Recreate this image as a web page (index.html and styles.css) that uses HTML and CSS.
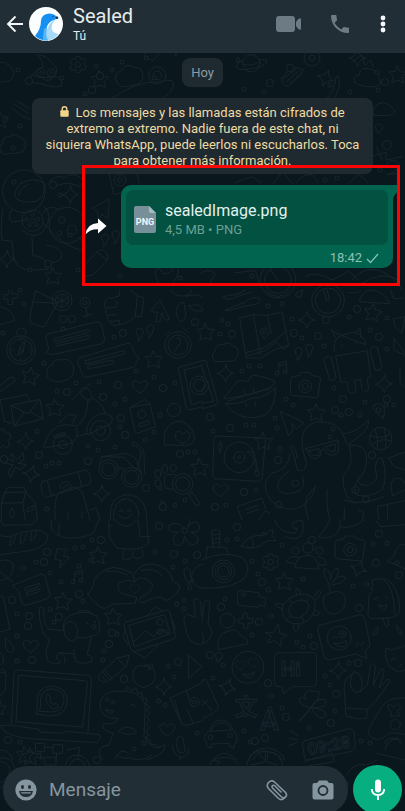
FILE: index.html
```html
<!DOCTYPE html>
<html lang="es">
<head>
<meta charset="utf-8">
<meta name="viewport" content="width=device-width, initial-scale=1">
<title>Sealed</title>
<link rel="stylesheet" href="styles.css">
</head>
<body>
<div class="app">
  <svg class="wallpaper" viewBox="0 0 405 811" preserveAspectRatio="xMidYMid slice" aria-hidden="true">
    <defs>
      <path id="star" d="M-3-26L6-9L26-7L12 7L17 25L0 17L-19 24L-14 5L-27-8L-9-10Z"/>
      <path id="spark" d="M2-26Q4-4 26 0Q5 3 1 26Q-3 4-26 1Q-4-3 2-26Z"/>
      <path id="heart" d="M0 20Q-30 2-21-13Q-11-25 0-9Q14-25 22-10Q25 4 0 20Z"/>
      <path id="cloud" d="M-30 24Q-46 6-28-8Q-26-30-4-26Q10-38 24-22Q44-18 40 4Q36 24 16 24Z"/>
      <g id="quotes"><path d="M-24 0a11 11 0 1 1 16 2q0 14-12 20q4-8 2-14q-5-2-6-8ZM8-10a11 11 0 1 1 16 2q0 14-12 20q4-8 2-14q-5-2-6-8Z"/></g>
      <g id="notes"><path d="M-10 14V-14L14-20V10M-10-6L14-12"/><circle cx="-15" cy="15" r="6"/><circle cx="9" cy="11" r="6"/></g>
      <g id="camera"><path d="M-40-25L-18-30L-14-38H14L18-30L40-26Q46-24 45-16L38 32Q36 38 30 37L-40 30Q-46 28-45 22L-44-18Q-44-24-40-25Z"/><circle r="19" cy="3"/><circle r="9" cy="3"/></g>
      <g id="gear"><path d="M-5-24H6L9-15L18-19L24-9L17-3L25 6L18 17L9 14L6 24H-6L-9 14L-19 18L-25 7L-17 1L-24-10L-17-19L-9-15Z"/><circle r="8"/></g>
      <g id="planet"><circle r="26"/><path d="M-25-8Q-52 2-44 14Q-30 24 10 14Q50 4 46-8Q42-14 24-10M-26 2Q0 12 27-6"/></g>
    </defs>

    <!-- top left -->
    <g transform="translate(0 50) scale(.3333)">
      <path d="M100 74Q112 54 130 50Q128 30 112 14Q144 18 156 40Q180 56 164 78Q190 86 184 108Q160 116 120 100Q84 100 84 88Q88 76 100 74ZM104 78Q130 88 164 78"/>
      <circle cx="122" cy="68" r="12"/><circle cx="154" cy="68" r="12"/><circle cx="122" cy="68" r="4"/><circle cx="154" cy="68" r="4"/>
      <path d="M128 84Q144 100 160 82Z"/>
      <use href="#gear" x="234" y="44"/><use href="#star" x="300" y="88"/>
      <path d="M0 38Q14 34 24 44Q44 56 40 76Q36 98 0 96"/>
      <path d="M38 160Q60 172 84 190M48 152Q70 166 90 178M36 172Q56 196 90 208M62 156L72 166"/>
      <use href="#star" x="0" y="208"/><use href="#cloud" x="36" y="286" transform="rotate(-6 36 286)"/>
      <circle cx="72" cy="424" r="64"/><path d="M62 400Q100 380 132 398Q138 440 110 454Q60 462 44 440Q46 414 62 400ZM56 436Q64 410 84 404"/>
      <path d="M8 478Q0 530 6 570L36 574L42 630Q60 664 100 660L144 658Q150 640 122 622L98 616L96 560M36 480Q20 500 36 516L74 510M132 470Q164 500 128 546Q100 570 66 540M140 586Q186 590 186 618Q180 640 144 640"/>
      <circle cx="98" cy="512" r="32"/><circle cx="98" cy="512" r="7"/><circle cx="98" cy="494" r="5"/><circle cx="115" cy="506" r="5"/><circle cx="110" cy="525" r="5"/><circle cx="88" cy="526" r="5"/><circle cx="80" cy="507" r="5"/>
      <circle cx="202" cy="526" r="54"/><path d="M128 490Q146 460 176 478M238 562Q262 590 242 600Q190 590 130 520"/><circle cx="186" cy="510" r="10"/><circle cx="216" cy="540" r="14"/><circle cx="178" cy="550" r="7"/>
      <use href="#spark" x="20" y="628"/><use href="#spark" x="210" y="434"/><use href="#star" x="160" y="678"/>
      <path d="M254 646L294 602Q310 594 320 608Q328 618 322 630L280 674L252 680ZM290 606Q304 616 320 630"/>
      <path d="M278 474L328 448L324 506L306 492L296 510L292 486Z"/>
      <path d="M150 392Q176 372 194 384Q214 364 240 382Q260 400 240 410Q200 392 174 406Z"/>
      <path d="M328 372L406 350L420 412L344 434Z"/><circle cx="360" cy="390" r="18"/><circle cx="360" cy="390" r="7"/>
      <use href="#quotes" x="330" y="570"/>
    </g>
    <!-- top centre and right -->
    <g transform="translate(202 50) scale(.3333)">
      <path d="M-256 96Q-268 70-242 62Q-230 36-204 52Q-172 50-178 90Q-190 108-230 110Q-250 112-256 96Z"/>
      <path d="M-280 152Q-200 92-132 96Q-78 80-86 110Q-100 150-180 170"/><circle cx="-134" cy="76" r="26"/><circle cx="-134" cy="76" r="13"/>
      <use href="#heart" x="-150" y="12"/><use href="#spark" x="-80" y="-8"/>
      <use href="#planet" x="148" y="40"/>
      <path d="M240 86Q246 68 278 52L304 58Q300 74 262 108Q238 112 240 86ZM252 96L292 62M262 100L298 70M246 84L282 58"/>
      <use href="#spark" x="370" y="84" transform="rotate(20 370 84)"/>
      <path d="M410 78Q420 112 392 152Q376 158 372 148Q400 120 402 82Z"/>
      <path d="M458 98Q452 78 472 74Q476 50 500 56Q532 60 532 88Q542 106 520 110Q480 112 458 98Z"/>
      <use href="#star" x="588" y="74"/><path d="M452 36L478 14L490 46L506 30L514 52"/>
      <use href="#spark" x="466" y="24"/>
      <path d="M514 188Q514 160 544 158Q572 166 580 188Q570 200 514 196Z"/>
      <path d="M520 230Q526 216 540 226Q546 240 528 248ZM544 276Q570 262 570 288L556 300L542 290ZM514 318L552 306V330L600 320M524 292L540 330"/>
      <path d="M552 346Q560 326 584 334Q600 350 574 366L556 374L588 370"/>
      <circle cx="330" cy="24" r="24"/><circle cx="330" cy="24" r="9"/>
      <path d="M284 398Q300 370 330 374L350 398M214 400L240 366L272 400M100 398L150 380L180 400M440 400L470 372L498 398"/>
      <circle cx="228" cy="690" r="54"/><circle cx="228" cy="690" r="40"/><path d="M228 690L206 660"/>
      <path d="M-130 700Q-150 660-130 654L-116 672Q-86 668-90 654L-70 650Q-70 690-100 708M-6 672Q20 650 40 672L24 700M100 668L160 662L172 700M310 680Q340 660 390 690L440 664L470 690M480 700Q540 660 590 690"/>
      <path d="M450 690Q480 650 530 660Q580 680 600 720"/>
    </g>
    <!-- middle left -->
    <g transform="translate(0 290) scale(.3333)">
      <path d="M36 0V12H54V24H38V44H24V28H12V14H26V0M0 50Q40 58 44 92L0 104M108 2L174 36L138 102Q130 116 118 108L90 98Q88 70 108 2ZM104 36L172 40"/>
      <circle cx="186" cy="32" r="30"/><circle cx="186" cy="32" r="20"/><path d="M186 12V52M168 22L204 42M168 42L204 22"/>
      <circle cx="255" cy="38" r="15"/><circle cx="255" cy="38" r="6"/><path d="M258 54L263 78M250 80L275 72"/>
      <path d="M316 34Q318 20 336 24L358 18V0M316 34Q308 46 318 54Q312 68 322 76Q318 92 332 94Q330 110 352 106Q362 104 358 92M318 54L346 52Q358 42 346 32M322 76L350 74M332 94L358 92M358 104Q390 100 406 78L424 80L432 24L412 18L392 0M406 78L412 18"/>
      <path d="M454 62L480 30L508 88Q498 94 492 84L486 68L480 94L468 96L472 66Q460 70 454 62ZM512 0Q524 20 552 18Q580 10 572 0M540 40Q520 60 534 86Q544 106 558 78L552 38ZM556 20Q584 8 608 22M566 48Q586 70 608 62Q608 36 566 48"/>
      <circle cx="63" cy="180" r="43"/><circle cx="63" cy="180" r="34"/><circle cx="64" cy="128" r="14"/><path d="M54 194L64 164L74 154L70 184ZM58 176L70 184M63 150V156M63 208V212M34 180H39M88 180H94"/>
      <path d="M144 132L288 96Q302 94 306 108L314 146Q314 158 302 162L156 194L136 188L146 178L138 144Q136 134 144 132ZM162 146L266 118Q274 122 266 128L164 154ZM168 160L266 136Q274 140 266 146L170 168Z"/>
      <path d="M238 204L382 160Q394 160 398 174L404 192L418 204L408 214Q412 226 400 232L260 262Q248 262 246 250L232 216Q232 206 238 204ZM256 212L372 182Q380 186 372 192L258 222ZM264 226L338 210Q346 216 338 222L266 236Z"/>
      <path d="M142 248Q138 228 158 226Q162 204 184 210Q212 202 220 230Q226 258 200 270Q160 284 142 262Q138 254 142 248Z"/>
      <use href="#star" x="462" y="208"/><use href="#star" x="92" y="258" transform="rotate(10 92 258)"/><use href="#star" x="166" y="353"/>
      <use href="#quotes" x="434" y="132"/><use href="#heart" x="420" y="290"/>
      <circle cx="534" cy="165" r="40"/><circle cx="534" cy="165" r="30"/><path d="M532 145Q546 140 540 160L524 184M496 136L508 126M552 116L564 128"/>
      <path d="M536 232L609 212M536 232Q534 240 538 250L558 350Q562 362 576 358L609 350M552 240L609 226M552 240L574 344L609 334"/>
      <circle cx="598" cy="286" r="28"/><circle cx="598" cy="286" r="18"/>
      <path d="M0 286L30 262Q48 258 44 274L0 306M0 330L80 314L90 334M0 330L14 394L36 400M34 346L120 328L130 386L44 408ZM34 346L84 372L120 328M44 408L72 366M130 386L90 366"/>
      <path d="M218 328L270 280M240 306Q242 288 264 296Q284 322 272 330Q250 332 240 306ZM264 330Q264 380 232 408L196 404Q150 406 132 466Q132 476 144 472L206 462Q240 450 230 412M276 320L310 352L314 370Q280 370 264 406Q256 426 264 434L334 400Q346 378 314 370M176 400L204 374L228 376L218 402M162 438L194 426Q202 432 192 438L166 444Z"/>
      <circle cx="188" cy="464" r="29"/><circle cx="188" cy="464" r="12"/><circle cx="302" cy="422" r="30"/><circle cx="302" cy="422" r="14"/><path d="M230 440L264 430"/>
      <path d="M390 352L434 328L450 342L466 410L412 430Q406 430 404 420ZM390 352L450 342M416 402L446 392Q452 400 444 404L420 410Z"/><circle cx="425" cy="373" r="12"/>
      <circle cx="522" cy="360" r="20"/><path d="M494 464Q484 410 528 394Q570 390 584 440Q584 466 556 466Z"/><use href="#heart" x="548" y="442"/>
      <path d="M0 420L10 416L16 430L30 430L34 444L24 452L30 466L18 474L8 466L0 474"/><use href="#spark" x="76" y="454"/><use href="#spark" x="94" y="552" transform="rotate(10 94 552)"/><use href="#spark" x="305" y="611"/>
      <path d="M34 490L52 510L70 488L72 508L54 520L80 524L60 540L46 530L32 562L24 548L40 524L14 520L20 504L40 514Z"/>
      <circle cx="326" cy="538" r="29"/><circle cx="326" cy="538" r="20"/><circle cx="395" cy="562" r="30"/><circle cx="395" cy="562" r="21"/><path d="M300 520L306 500L378 490Q410 500 412 520L426 550M306 500L372 502L408 540M412 540L424 490Q418 470 396 464Q394 454 406 458Q436 474 432 500L434 550M354 536Q366 528 374 544"/>
      <path d="M128 574L254 540Q266 540 272 562Q274 580 264 584L140 622Q128 622 124 596Q122 580 128 574ZM142 572L154 618M234 546L246 590M166 690Q160 620 180 606L226 590L246 604L270 690M180 596Q180 576 200 574Q216 580 212 594M190 596Q192 584 204 586M204 668V690M246 664V686M270 660L288 654L300 690"/>
      <path d="M14 608L24 592H72L78 606M14 608L78 606L106 640L112 690M14 608L4 640V690M14 608L4 640L68 638L78 606M68 638L76 690M82 656L102 646V656L84 666ZM36 654Q52 676 36 684Q22 676 36 654Z"/>
      <path d="M332 690Q324 620 382 614Q440 616 440 690M340 690Q340 630 378 626Q418 634 416 680M358 664Q364 656 370 664M382 664Q388 656 394 664M356 674Q376 700 396 672"/>
      <circle cx="548" cy="582" r="31"/><circle cx="548" cy="582" r="21"/><path d="M566 612L576 606L600 640Q596 650 586 644ZM528 554H500Q490 560 494 580Q490 600 520 598"/><ellipse cx="474" cy="552" rx="9" ry="12"/><ellipse cx="494" cy="536" rx="9" ry="12"/><ellipse cx="520" cy="534" rx="9" ry="12"/><ellipse cx="474" cy="580" rx="9" ry="11"/>
      <use href="#star" x="600" y="532"/>
    </g>
    <!-- middle right -->
    <g transform="translate(202 290) scale(.3333)">
      <path d="M62 22L80 16Q100 18 130 0M62 22Q80 34 104 20L150 6M70 60L130 36Q150 16 174 26Q176 44 150 44L76 62ZM188 0Q230 40 264 0M284 8L302 0L296 24L282 18ZM472 34Q480 0 510 0Q550 6 562 40ZM440 8H468L476 0M566 0L574 26L606 24"/>
      <circle cx="378" cy="32" r="49"/><circle cx="378" cy="32" r="38"/><path d="M364 0L374 32L382 28L376 0"/>
      <path d="M114 84L154 74L196 76L240 66L260 166L216 180L178 204L134 204ZM132 188L184 174L220 150L248 128M134 198L190 182L222 156M154 74L176 196M196 76L208 130M216 148L244 178L256 170"/>
      <path d="M188 146Q170 124 178 118Q190 108 200 120Q206 130 188 146Z"/><circle cx="188" cy="127" r="5"/>
      <use href="#star" x="12" y="126"/><use href="#star" x="514" y="68" transform="rotate(8 514 68)"/><use href="#spark" x="314" y="90"/><use href="#cloud" x="68" y="190"/><use href="#quotes" x="305" y="190"/><use href="#notes" x="240" y="234"/><use href="#camera" x="310" y="286"/>
      <use href="#spark" x="70" y="250"/><use href="#spark" x="546" y="282"/><use href="#star" x="344" y="368"/><use href="#star" x="186" y="454"/><use href="#heart" x="56" y="600"/>
      <path d="M398 182Q390 146 420 136L390 124M400 142L388 118M460 128L474 114L476 142M420 136Q440 126 460 128Q486 136 492 164ZM402 198L496 182L506 260L496 266L500 298Q490 310 480 296L476 268L458 272L462 304Q450 316 440 304L436 276L418 276ZM366 210Q370 196 388 202L402 262Q400 274 384 270ZM504 180Q506 168 526 172L540 230Q536 244 520 240Z"/><circle cx="420" cy="166" r="2"/><circle cx="462" cy="158" r="2"/>
      <path d="M64 326L104 276Q124 268 136 276L150 256Q190 258 218 274Q220 290 180 302Q130 320 64 326ZM70 340Q110 346 150 324Q190 326 220 292Q222 350 190 376Q110 400 70 340ZM78 334Q120 316 204 296M124 298L130 310M154 296L156 308M130 340L134 350M160 336L158 350"/>
      <path d="M0 212L12 212L48 338Q46 346 0 356M0 232L36 334L0 340M0 262Q18 280 0 304"/>
      <path d="M236 364L306 398L284 418L270 400L272 422L260 436Z"/>
      <path d="M42 438L184 444Q192 446 190 456L180 566Q176 574 168 574L38 566Q30 562 32 552L36 446Q36 440 42 438Z"/><circle cx="112" cy="502" r="46"/><circle cx="112" cy="502" r="17"/><circle cx="112" cy="502" r="4"/><path d="M136 486Q150 480 156 494L168 540M136 486L162 510V544M56 454L60 470L54 488L50 470Z"/><circle cx="165" cy="550" r="8"/>
      <path d="M304 486Q286 410 344 396Q410 392 424 436Q432 460 442 466L448 512Q440 540 424 560Q420 620 460 640M304 486L314 520Q310 550 286 540Q280 500 264 468Q280 462 286 506M264 492Q260 540 210 550Q180 570 194 610Q214 660 280 658Q330 640 340 590Q304 620 312 660L320 690M260 544Q220 570 228 600Q250 620 290 604Q310 596 302 560M422 432Q460 430 500 390Q500 420 470 440L440 464M442 466Q490 460 494 500Q494 550 466 572Q450 600 466 616Q500 624 540 600Q560 560 540 504Q520 500 520 540Q536 570 500 586Q460 590 470 560M376 600Q370 640 384 690M426 630Q470 650 546 620M426 660Q430 640 426 690M480 690Q494 660 470 660"/>
      <path d="M310 476L408 450L410 484Q396 502 376 492L366 476L356 482Q360 504 338 506Q320 502 318 484ZM322 482L352 476L350 496Q332 502 322 482ZM370 470L400 462L400 482Q384 492 370 470Z"/>
      <circle cx="280" cy="580" r="10"/><circle cx="460" cy="600" r="11"/><circle cx="230" cy="644" r="10"/><circle cx="492" cy="628" r="10"/>
      <circle cx="536" cy="446" r="34"/><path d="M504 436Q540 452 566 430M520 418Q530 450 526 478M546 414Q556 450 550 476M508 464Q540 440 568 454"/>
      <path d="M544 386Q506 358 516 346Q530 334 546 350Q550 366 544 386Z"/><circle cx="530" cy="360" r="7"/>
      <path d="M572 616Q560 580 576 566Q600 560 609 580M609 600L572 616M560 504L609 486M560 504L576 530L609 540M576 86L609 80L600 130L580 110ZM576 144L609 190M576 144V180L609 196M594 236V280L609 292"/>
      <path d="M106 650L180 624L190 656M106 650L120 690M130 658L168 646M134 670L170 658M170 690L190 662L204 670M530 690L526 650L609 632M556 640V690"/>
    </g>
    <!-- lower left -->
    <g transform="translate(0 520) scale(.3333)">
      <path d="M0 44Q20 60 60 38L110 30Q150 36 142 60Q130 90 60 96L0 104M28 76L34 52M28 76Q40 80 46 48M60 70L64 44M60 70Q72 74 80 40M92 62L94 36M92 62Q104 64 110 32M0 0L10 16L96 14L108 0"/>
      <path d="M154 0Q150 40 176 46L188 52Q240 60 280 40L296 0M176 46L178 10M326 0L328 50L350 84Q420 96 446 70L440 0M326 20L336 14M414 0L420 50L452 50M346 0Q380 40 410 0M370 90L368 116Q390 122 396 110L400 92M400 112Q420 120 430 108L426 86"/>
      <path d="M552 24Q530 0 508 16Q500 40 536 36Q510 50 526 74Q550 86 554 48Q566 84 590 70Q604 50 572 36Q604 40 598 16Q586-6 562 22Q576 0 566-6"/><circle cx="554" cy="32" r="8"/>
      <path d="M172 86L200 90L190 108L208 112L178 146L184 122L166 118Z"/><use href="#star" x="296" y="106"/><use href="#star" x="190" y="243" transform="rotate(5 190 243)"/><use href="#star" x="341" y="290"/><use href="#notes" x="234" y="170"/>
      <path d="M0 122Q36 112 40 140Q40 176 0 182M0 156L38 186M38 196L124 162Q134 162 136 172L150 224Q150 232 142 236L78 256Q68 256 64 244L58 216ZM74 204L118 190Q124 196 116 200L78 212ZM80 218L118 206Q122 212 114 216L82 226Z"/>
      <path d="M264 222Q284 200 282 180Q300 150 340 142Q370 144 398 160L404 186Q384 176 358 188Q346 210 370 222L410 232L406 250Q380 252 340 252L312 266Q280 250 264 222ZM404 160Q420 130 460 132Q510 140 520 186L540 196Q540 220 500 242L484 232Q460 230 430 248Q410 250 422 232Q456 220 458 196Q450 174 416 174L404 186M320 154Q360 150 382 166M424 152Q460 140 486 166"/><use href="#heart" x="405" y="206" transform="translate(405 206) scale(.7) translate(-405 -206)"/>
      <path d="M552 150Q562 134 570 152L574 172L582 182L568 184L576 206Q568 216 564 204L564 184L556 176ZM609 132Q576 140 574 176Q580 200 609 206M582 240Q594 230 602 246L604 286M582 240L586 292L560 282Q546 290 556 320Q560 370 600 374"/>
      <path d="M118 264Q124 254 132 268Q128 310 146 328L192 332M118 264Q116 320 138 350L148 358L138 396L144 424Q160 436 178 430Q184 420 168 414L176 398L222 402L228 424Q250 436 276 424Q280 408 262 404L274 348M192 332Q184 300 210 286Q260 266 290 288Q304 310 296 340Q270 356 232 354M192 332Q186 310 210 304Q230 306 232 330Q236 360 214 362Q192 356 192 332ZM180 398Q200 410 194 428M236 274Q260 264 280 286M222 390V404"/><circle cx="282" cy="320" r="6"/><circle cx="262" cy="310" r="2"/><circle cx="284" cy="306" r="2"/>
      <use href="#heart" x="92" y="378"/><path d="M16 354Q50 380 38 396Q22 400 18 384ZM0 228L10 230L30 328L0 336M0 396Q16 410 8 430L0 434"/>
      <path d="M378 306L500 270Q508 270 510 278L526 346Q526 354 518 358L406 394Q396 396 392 386L372 318Q372 308 378 306ZM388 316L494 284L510 340L404 380ZM400 366L436 332L460 350L482 330L508 342M440 290L464 260L484 270M518 300L526 326L520 340M404 396L434 414L476 374M376 330L368 350L384 374"/><circle cx="480" cy="306" r="10"/><path d="M470 340Q470 328 484 328Q500 328 506 340"/>
      <path d="M296 466L352 414L388 406L378 440L322 486Q306 490 296 478ZM308 456L328 480M314 450L336 474M352 414L374 440M306 470L316 482"/>
      <path d="M434 438Q400 430 398 466Q404 500 432 502Q468 494 466 460Q460 434 434 438ZM434 438L440 434Q448 430 446 450Q460 448 458 430Q446 434 446 450M566 406L606 440L566 474Z"/><use href="#spark" x="491" y="500"/>
      <path d="M34 612L42 464Q44 448 58 450L262 466Q276 468 274 482L264 638M48 604L56 466L254 482Q264 484 262 494L248 620ZM0 616H34L118 628L120 636L188 640L196 634L300 644Q304 656 292 668L92 656Q10 650 0 616Z"/>
      <path d="M112 566Q104 500 154 498Q202 502 202 544Q198 586 154 588L110 582ZM122 560Q114 510 156 506Q194 512 192 544Q186 576 154 576L118 574ZM140 524Q150 520 152 536L150 544Q160 558 168 550Q180 556 174 562Q160 572 146 556Q132 540 140 524Z"/>
      <path d="M0 460Q14 450 18 466L16 510L0 528M2 452A8 8 0 0 1 16 460M0 540L4 556L18 560L8 572L10 584L0 580"/>
      <path d="M354 596Q300 598 300 552Q304 514 350 514Q420 506 436 556L432 650Q460 700 494 674Q500 690 470 708L440 720M354 596Q350 614 310 612Q300 630 340 640L326 676Q300 676 298 700L310 720M356 634Q370 614 400 626L410 638Q380 650 356 634ZM346 716Q360 680 386 700M378 510L382 500L396 512L408 504L414 520L426 518L428 534L440 536L438 552L450 560L440 570L450 582L440 590L450 602L440 612L448 624L438 632L446 646L436 652L450 662L454 676L468 672L478 684M316 568Q330 576 342 570Q338 584 326 580ZM390 556Q400 548 406 560"/><circle cx="322" cy="540" r="5"/><circle cx="340" cy="546" r="5"/>
      <path d="M510 534Q560 514 609 486M510 534L546 612L560 616L609 602M524 540L540 600M560 510L568 540M562 570L580 610"/><circle cx="584" cy="546" r="14"/><circle cx="584" cy="546" r="6"/>
      <use href="#heart" x="502" y="628"/><path d="M532 656Q534 644 548 652L556 690Q552 702 538 698L530 680ZM518 676Q518 706 544 712Q566 710 568 684M540 712V720"/>
      <path d="M108 670H134V694H108ZM160 674H188V700H160ZM134 682H160M120 694L124 720M170 700L168 720M122 712H168M202 690L240 682L232 720M0 690Q30 690 38 720"/><use href="#star" x="76" y="704"/>
    </g>
    <!-- lower right -->
    <g transform="translate(202 520) scale(.3333)">
      <path d="M16 80L74 84L78 104M16 80L12 114M28 34Q40 24 54 34L52 82M28 34L34 80M30 46L54 42M32 58L54 54M32 70L54 66M0 120Q60 90 120 112Q150 140 130 172Q90 210 0 204"/><circle cx="64" cy="154" r="34"/><circle cx="64" cy="154" r="17"/><circle cx="64" cy="154" r="25"/>
      <path d="M118 78Q140 40 188 46L202 32L214 30L210 46L222 62L196 62Q160 96 118 78ZM150 54Q160 70 148 86M178 48L184 36L196 44M218 0Q230 40 280 40L286 26Q260 24 276 6L300 0Q310 30 294 50Q280 62 250 50M350 50Q370 30 384 0M350 50Q380 62 404 40Q420 20 412 0M412 20Q450 30 486 0M520 0L536 20L609 14"/>
      <use href="#gear" x="206" y="126"/><use href="#star" x="248" y="184"/><use href="#spark" x="470" y="146" transform="rotate(20 470 146)"/><use href="#camera" x="444" y="86"/>
      <circle cx="318" cy="84" r="16"/><circle cx="280" cy="92" r="11"/><circle cx="352" cy="92" r="11"/><path d="M280 142Q280 108 318 106Q348 108 350 146ZM254 126Q258 108 276 110L290 112M346 110Q372 110 372 136L352 134M254 126L278 130"/>
      <path d="M556 124Q580 110 584 86Q596 70 609 74M556 124L609 146M112 212L170 218L172 230L192 234L188 260L174 254L170 262L110 256Q104 250 108 216Z"/><circle cx="124" cy="224" r="5"/>
      <path d="M240 264Q250 230 300 222Q340 224 340 256Q336 300 296 312Q240 316 240 264ZM260 270Q262 244 300 240Q322 242 320 262Q312 292 284 294Q262 294 260 270ZM284 224Q276 206 290 206L296 222M334 232Q350 206 356 214Q358 226 340 240M340 272Q360 276 348 288L332 284M276 314Q272 334 284 334Q292 330 290 314M240 266Q216 260 220 252Q230 248 242 254M262 238L270 250M320 236L312 248M252 300L266 286M306 306L298 292"/>
      <path d="M384 220Q360 220 364 250Q370 284 400 282Q434 270 430 236Q424 206 386 218L380 190M380 190Q360 160 368 146Q384 148 386 180Q390 146 408 144Q414 160 390 190Q410 160 430 172Q430 190 390 194"/>
      <path d="M514 196Q504 180 516 178L548 176Q590 190 594 270Q590 290 560 294L510 296Q496 294 498 280L502 222L514 210L506 206ZM546 180Q576 200 578 280M542 294L550 318Q560 324 560 312L558 294M516 238L528 232M550 226L560 236M530 254Q544 264 554 252Q556 270 542 270Q534 266 530 254Z"/>
      <circle cx="76" cy="302" r="22"/><path d="M48 388Q44 350 66 338L88 330Q110 330 112 344Q136 352 138 370ZM0 340Q10 370 0 372M0 306L6 250Q12 236 24 246L18 310Q34 330 26 350Q16 370 0 370"/>
      <path d="M124 282L134 278L136 294L154 296L152 308L138 310V324H126L124 310L108 308L110 296L122 296Z"/><path d="M228 314L234 340L256 346L238 356L236 380L218 362L196 370L208 348L190 338L214 338Z"/>
      <path d="M352 316L474 284Q486 284 488 296L504 372Q502 386 490 392L494 416L462 402L382 420Q370 420 366 408L348 332Q346 320 352 316Z"/><circle cx="412" cy="354" r="36"/><circle cx="422" cy="342" r="10"/><circle cx="422" cy="342" r="3"/><path d="M388 356Q396 346 406 352M396 370Q416 374 434 362Q436 380 422 380Q402 380 396 370ZM464 380L470 366M476 378L484 366M514 340Q518 322 526 322Q532 338 514 346ZM584 318Q600 328 600 344Q586 340 584 318Z"/>
      <circle cx="138" cy="442" r="48"/><use href="#heart" x="116" y="436" transform="translate(116 436) scale(.7) translate(-116 -436)"/><use href="#heart" x="154" y="428" transform="translate(154 428) scale(.7) translate(-154 -428)"/><path d="M124 462Q144 468 158 454Q154 474 140 474Z"/>
      <path d="M228 398H334Q344 400 344 410V488Q342 498 334 500H272L244 522L240 500H228Q218 498 218 488V410Q218 400 228 398Z"/>
      <text class="doodle-text" x="236" y="468" font-size="62">Hi</text>
      <path d="M552 384L568 390Q584 382 596 384L609 376M552 384Q546 410 562 440L590 456L609 450M566 420Q574 412 582 418M590 440L600 432"/>
      <use href="#spark" x="408" y="452"/><use href="#spark" x="76" y="502" transform="rotate(15 76 502)"/>
      <path d="M430 564L426 500Q430 470 450 464Q450 450 470 460Q490 490 474 516M450 464Q436 500 460 518L478 512L496 494L506 436Q516 424 520 440L514 496L534 452Q546 442 546 456L532 504L556 478Q568 476 562 488L520 544L496 568L494 596Q460 600 432 588L430 564L496 568"/>
      <path d="M328 562Q290 560 292 536Q304 528 314 540Q298 516 322 512Q340 516 350 514Q358 530 328 562Q340 536 366 538Q384 556 350 564L328 562Q380 570 370 590Q350 608 328 562Q300 600 290 604L328 562"/>
      <path d="M0 482L12 478L50 562Q44 580 0 596M0 540L30 570M0 556L18 540M498 640Q500 620 540 560Q560 530 609 534M498 640Q510 664 540 656L560 640Q580 636 609 644M562 552L576 562L586 550L596 562L586 574L594 588L578 588L566 590L568 576L558 566ZM550 670Q550 650 580 656Q600 660 594 676"/><circle cx="580" cy="614" r="15"/><path d="M524 700L609 720M550 690Q550 660 590 654"/>
      <text class="doodle-text" x="98" y="586" font-size="68">文</text><text class="doodle-text" x="174" y="630" font-size="84">A</text>
      <path d="M8 658Q6 640 22 634Q30 600 58 600Q90 604 92 630Q108 640 104 668L96 672V684L84 680L82 670L30 672L28 684L16 680L14 670ZM26 634L88 630Q80 608 56 608Q34 612 26 634Z"/><circle cx="26" cy="652" r="7"/><circle cx="84" cy="646" r="7"/>
      <path d="M308 662L442 626Q452 626 456 636L460 676Q458 690 448 694L322 720L308 716L302 674Q302 664 308 662ZM264 632L288 646M262 656L286 658M262 676L286 668"/>
      <text class="doodle-text" transform="rotate(-11 320 706)" x="320" y="706" font-size="50">09:28</text>
      <path d="M140 720Q150 684 196 684Q240 690 248 720M152 720Q160 694 196 694Q230 700 236 720M34 720Q60 680 106 720M196 694V720M168 700L190 720"/>
    </g>
    <!-- bottom edge -->
    <g transform="translate(0 755) scale(.3333)">
      <path d="M0 10Q34 0 44 40Q40 90 0 100M0 20Q28 20 30 46Q24 76 0 84M110 8H134V30H168V10M196 34Q200 0 232 0Q264 6 270 34M208 34Q214 12 232 12Q250 14 256 34M350 0Q370 14 390 8Q420 24 456 0"/><use href="#star" x="92" y="4"/>
      <path d="M630 30Q630 10 666 8Q700 4 714 26M640 16L660 20L650 30M740 30Q750-20 796-12Q850-6 848 30M754 30L796 20L834 30M796-10V20M910 20L996-6L1004 20L920 34M1040 60Q1060 20 1100 30L1130 16M1020 150Q1050 100 1044 80"/>
    </g>

    <!-- scattered bubbles: wide stroke first, then the background colour inside it -->
    <defs>
      <path id="dots-s" d="M18 70h0M62 78h0M60 105h0M85 94h0M45 142h0M13 148h0M20 126h0M5 120h0M96 66h0M112 70h0M122 62h0M154 78h0M146 58h0M238 60h0M244 89h0M264 92h0M330 85h0M350 92h0M377 72h0M380 170h0M378 90h0M14 182h0M60 195h0M70 235h0M30 270h0M20 290h0M78 270h0M120 276h0M180 278h0M252 276h0M325 180h0M337 178h0M24 304h0M63 329h0M114 337h0M3 333h0M44 363h0M76 383h0M57 391h0M99 382h0M115 404h0M125 399h0M37 431h0M88 446h0M98 450h0M115 447h0M52 463h0M46 466h0M59 463h0M136 371h0M154 377h0M145 440h0M175 383h0M160 415h0M188 452h0M154 432h0M162 503h0M175 505h0M185 500h0M47 509h0M120 427h0M160 488h0M195 452h0M222 320h0M228 324h0M220 334h0M242 371h0M260 366h0M268 306h0M282 304h0M249 366h0M292 319h0M302 338h0M324 346h0M334 388h0M286 399h0M275 418h0M277 428h0M246 425h0M254 425h0M293 405h0M387 318h0M370 330h0M387 349h0M365 402h0M349 317h0M280 449h0M213 431h0M226 505h0M256 490h0M386 405h0M394 405h0M330 437h0M341 415h0M360 415h0M333 429h0M23 568h0M36 562h0M75 548h0M83 547h0M92 540h0M91 560h0M50 573h0M61 582h0M79 566h0M83 601h0M17 614h0M50 609h0M17 636h0M17 661h0M54 622h0M117 634h0M104 651h0M103 660h0M160 632h0M168 666h0M155 552h0M173 567h0M185 561h0M177 604h0M184 600h0M184 609h0M159 701h0M165 705h0M134 749h0M144 743h0M20 742h0M197 733h0M174 677h0M252 561h0M258 574h0M227 540h0M237 539h0M282 545h0M303 579h0M269 590h0M268 589h0M225 599h0M271 616h0M252 635h0M310 636h0M303 647h0M297 642h0M245 715h0M270 709h0M282 708h0M271 696h0M335 711h0M353 586h0M367 584h0M373 544h0M374 563h0M387 543h0M397 563h0M218 660h0M223 665h0M213 678h0M325 676h0M330 685h0M349 663h0M244 731h0M250 742h0M361 741h0M370 743h0M309 728h0"/>
      <path id="dots-l" d="M29 81h0M100 76h0M92 90h0M270 83h0M290 68h0M271 166h0M385 82h0M53 185h0M48 264h0M63 319h0M72 319h0M123 333h0M118 385h0M67 392h0M103 397h0M39 455h0M125 435h0M121 418h0M88 461h0M4 459h0M163 388h0M195 322h0M180 454h0M146 488h0M163 507h0M232 334h0M318 336h0M294 333h0M326 320h0M357 309h0M379 337h0M387 399h0M343 399h0M349 412h0M335 410h0M230 428h0M210 417h0M244 492h0M215 507h0M372 455h0M278 460h0M47 552h0M44 562h0M101 540h0M79 594h0M29 616h0M28 626h0M59 617h0M32 660h0M12 600h0M109 644h0M112 633h0M159 526h0M174 554h0M197 555h0M178 662h0M124 679h0M8 740h0M237 527h0M262 582h0M259 622h0M221 607h0M312 540h0M379 534h0M376 563h0M359 608h0M314 646h0M268 683h0M219 656h0M336 694h0M286 717h0M265 738h0M331 723h0M358 663h0M399 575h0M255 741h0M210 655h0M97 760h0"/>
    </defs>
    <use href="#dots-s" class="ring-s"/><use href="#dots-s" class="hole-s"/>
    <use href="#dots-l" class="ring-l"/><use href="#dots-l" class="hole-l"/>
  </svg>

  <header class="topbar">
    <button class="icon-btn back" type="button" aria-label="Atrás">
      <svg width="18" height="18" viewBox="0 0 18 18"><path d="M17 9H2M9.500 1.500L2 9L9.500 16.500" fill="none" stroke="#f2f6f8" stroke-width="1.900"/></svg>
    </button>
    <svg class="avatar" viewBox="0 0 34 34" aria-hidden="true">
      <circle cx="17" cy="17" r="17" fill="#fbfefe"/>
      <path d="M6 29Q12 22 12 13.500Q13 7 20 6.500Q25 6.500 27.500 9.500L29 10.500Q29 12 26 12.500Q18 15 17.500 22Q17 29 19 33.500Q11 33.500 6 29Z" fill="#1590f2"/>
      <path d="M25 13Q16 19 17 33.500Q25 33.500 29.500 27Q23 26 22.500 21Q22.500 17 26 13Z" fill="#a7d9f6"/>
      <path d="M15 22Q14 27 14 33.300H19Q16 28 18 20Z" fill="#55b5f7"/>
      <circle cx="28" cy="10.800" r="1.300" fill="#17354a"/><circle cx="24" cy="9.500" r=".6" fill="#17354a"/>
    </svg>
    <div class="contact">
      <h1>Sealed</h1>
      <p>Tú</p>
    </div>
    <nav class="actions">
      <button class="icon-btn" type="button" aria-label="Videollamada">
        <svg width="26" height="18" viewBox="0 0 26 18" fill="#6d7b84"><rect x="0" y="1" width="19" height="16" rx="3"/><path d="M20 7Q22 3.500 24 3.200Q25 3.200 25 4V14Q25 15 24 14.800Q22 14.500 20 11Z"/></svg>
      </button>
      <button class="icon-btn" type="button" aria-label="Llamada">
        <svg width="18" height="18" viewBox="3 3 18 18" fill="#6d7b84"><path d="M6.620 10.790c1.440 2.830 3.760 5.140 6.590 6.590l2.200-2.200c.27-.27.67-.36 1.020-.24 1.120.37 2.330.57 3.570.57.55 0 1 .45 1 1V20c0 .55-.45 1-1 1C10.610 21 3 13.390 3 4c0-.55.45-1 1-1h3.500c.55 0 1 .45 1 1 0 1.250.2 2.450.57 3.570.11.35.03.74-.25 1.020l-2.200 2.200z"/></svg>
      </button>
      <button class="icon-btn" type="button" aria-label="Más opciones">
        <svg width="10" height="20" viewBox="0 0 10 20" fill="#f4f8fa"><circle cx="5" cy="4" r="2.400"/><circle cx="5" cy="10" r="2.400"/><circle cx="5" cy="16" r="2.400"/></svg>
      </button>
    </nav>
  </header>

  <main class="chat">
    <p class="day">Hoy</p>
    <p class="notice"><svg class="lock" width="9" height="11" viewBox="0 0 9 11"><path d="M2.200 5V3a2.300 2.300 0 0 1 4.600 0V5" fill="none" stroke="#f3d58a" stroke-width="1.400"/><rect x=".3" y="4.300" width="8.400" height="6.500" rx="1" fill="#f3d58a"/></svg>Los mensajes y las llamadas están cifrados de extremo a extremo. Nadie fuera de este chat, ni siquiera WhatsApp, puede leerlos ni escucharlos. Toca para obtener más información.</p>

    <div class="message-row">
      <button class="icon-btn forward" type="button" aria-label="Reenviar">
        <svg width="22" height="17" viewBox="0 0 22 17"><path d="M.5 16.500Q2 5.500 13 5V.5L21.500 8L13 15.500V11.300Q5 11 .5 16.500Z" fill="#fff"/></svg>
      </button>
      <article class="bubble">
        <svg class="tail" width="7" height="14" viewBox="0 0 7 14" aria-hidden="true"><path d="M-1 0H7V5Q1 9 0 14H-1Z" fill="#00644e"/></svg>
        <a class="file" href="#">
          <svg width="22" height="27" viewBox="0 0 22 27" aria-hidden="true"><path d="M2 0H15L22 7V25Q22 27 20 27H2Q0 27 0 25V2Q0 0 2 0Z" fill="#768f98"/><path d="M15 0L22 7H17Q15 7 15 5Z" fill="#a2bcc1"/><text x="11" y="19" text-anchor="middle" class="file-type">PNG</text></svg>
          <span class="file-info">
            <span class="file-name">sealedImage.png</span>
            <span class="file-meta">4,5 MB • PNG</span>
          </span>
        </a>
        <p class="stamp"><time>18:42</time><svg width="13" height="11" viewBox="0 0 13 11"><path d="M1 6L4.500 9.500L12 1" fill="none" stroke="#7fc4b3" stroke-width="1.300"/></svg></p>
      </article>
    </div>
  </main>

  <footer class="composer">
    <div class="field">
      <button class="icon-btn" type="button" aria-label="Emojis">
        <svg width="22" height="22" viewBox="0 0 22 22"><circle cx="11" cy="11" r="10.600" fill="#8696a0"/><ellipse cx="7.500" cy="8" rx="1.500" ry="1.900" fill="#222e35"/><ellipse cx="14.500" cy="8" rx="1.500" ry="1.900" fill="#222e35"/><path d="M4 12H18Q17 18 11 18Q5 18 4 12Z" fill="#222e35"/><path d="M6 13.200H16L15.500 14.600H6.500Z" fill="#8696a0"/></svg>
      </button>
      <input type="text" placeholder="Mensaje" aria-label="Mensaje">
      <button class="icon-btn" type="button" aria-label="Adjuntar">
        <svg width="22" height="22" viewBox="0 0 22 22" fill="none" stroke="#8696a0" stroke-width="1.600" stroke-linecap="round"><path d="M17 20Q14.500 21.500 12 19L2.500 9.500Q0 6.500 2.500 3.500Q5.500 .5 8.500 3L19.500 13.500Q21.500 16 19.600 17.800Q17.500 19.800 15 17.500L6.500 9Q5.500 7.500 6.500 6.600Q7.700 5.700 9 7L15 13M17 20Q19 19.200 19.600 17.800"/></svg>
      </button>
      <button class="icon-btn" type="button" aria-label="Cámara">
        <svg width="22" height="20" viewBox="0 0 22 20"><path d="M7 .5H15L17 3H19.500Q21.500 3 21.500 5V17.500Q21.500 19.500 19.500 19.500H2.500Q.5 19.500 .5 17.500V5Q.5 3 2.500 3H5Z" fill="#8696a0"/><circle cx="11" cy="10.500" r="4.500" fill="none" stroke="#222e35" stroke-width="1.800"/></svg>
      </button>
    </div>
    <button class="mic" type="button" aria-label="Grabar audio">
      <svg width="16" height="22" viewBox="0 0 16 22"><rect x="5" y=".5" width="6" height="13" rx="3" fill="#fff"/><path d="M1.800 10Q2 16 8 16Q14 16 14.200 10M8 16V21" fill="none" stroke="#fff" stroke-width="1.900"/></svg>
    </button>
  </footer>
</div>
</body>
</html>
```
FILE: styles.css
```css
* {
  box-sizing: border-box;
}

body,
h1,
p {
  margin: 0;
}

body {
  font-family: Roboto, "Noto Sans", sans-serif;
  background: #0a171d;
  color: #e6ecef;
}

.app {
  position: relative;
  display: flex;
  flex-direction: column;
  height: 100vh;
  overflow: hidden;
  isolation: isolate;
}

.wallpaper {
  position: absolute;
  inset: 0;
  z-index: -1;
  width: 100%;
  height: 100%;
  fill: none;
  stroke: #19252c;
  stroke-width: 3;
  stroke-linejoin: round;
  stroke-linecap: round;
}

.doodle-text {
  font-family: Roboto, "Noto Sans CJK SC", sans-serif;
  font-weight: 700;
}

.ring-s {
  stroke-width: 5;
}

.hole-s {
  stroke: #0a171d;
  stroke-width: 3;
}

.ring-l {
  stroke-width: 8;
}

.hole-l {
  stroke: #0a171d;
  stroke-width: 6;
}

.icon-btn {
  display: flex;
  padding: 0;
  border: 0;
  background: none;
  cursor: pointer;
}

.topbar {
  display: flex;
  align-items: center;
  height: 53px;
  padding: 0 17px 5px 6px;
  background: #222e35;
}

.avatar {
  width: 34px;
  height: 34px;
  margin-left: 5px;
}

.contact {
  flex: 1;
  margin-left: 10px;
  padding-top: 2px;
}

.contact h1 {
  font-size: 20px;
  font-weight: 400;
  line-height: 22px;
}

.contact p {
  font-size: 12px;
  line-height: 18px;
}

.actions {
  display: flex;
  align-items: center;
  gap: 29px;
}

.chat {
  flex: 1;
  display: flex;
  flex-direction: column;
  align-items: center;
  padding-top: 5px;
}

.day {
  padding: 0 9px;
  border-radius: 8px;
  background: #1e2a30;
  color: #8d9ba4;
  font-size: 13px;
  line-height: 29px;
}

.notice {
  width: calc(100% - 64px);
  margin-top: 11px;
  padding: 7px 11px 5px;
  border-radius: 8px;
  background: #1e2a30;
  color: #f0dba4;
  font-size: 13px;
  line-height: 16px;
  text-align: center;
}

.lock {
  margin-right: 6px;
}

.message-row {
  position: relative;
  display: flex;
  align-items: center;
  align-self: stretch;
  gap: 14px;
  margin-top: 11px;
  padding: 0 12px 0 85px;
}

.message-row::after {
  content: "";
  position: absolute;
  inset: -20px 5px -18px 82px;
  border: 3px solid #fb0505;
  pointer-events: none;
}

.bubble {
  position: relative;
  flex: 1;
  padding: 5px 5px 3px;
  border-radius: 10px 0 10px 10px;
  background: #00644e;
}

.tail {
  position: absolute;
  top: 0;
  left: 100%;
}

.file {
  display: flex;
  align-items: center;
  gap: 9px;
  height: 55px;
  padding: 3px 8px 0;
  border-radius: 7px;
  background: #025141;
  text-decoration: none;
}

.file-type {
  fill: #f2f6f6;
  font-size: 9px;
  font-weight: 700;
}

.file-info {
  display: flex;
  flex-direction: column;
}

.file-name {
  color: #e3f1ee;
  font-size: 16px;
  line-height: 20px;
}

.file-meta {
  color: #6d9f93;
  font-size: 13px;
  line-height: 17px;
}

.stamp {
  display: flex;
  justify-content: flex-end;
  align-items: center;
  gap: 4px;
  padding: 6px 9px 0 0;
  color: #8cc0b4;
  font-size: 13px;
  line-height: 14px;
}

.composer {
  display: flex;
  align-items: center;
  gap: 5px;
  margin-bottom: -3px;
  padding: 0 3px;
}

.field {
  flex: 1;
  display: flex;
  align-items: center;
  gap: 24px;
  min-width: 0;
  height: 48px;
  padding: 0 14px 0 12px;
  border-radius: 24px;
  background: #222e35;
}

.field input {
  flex: 1;
  min-width: 0;
  margin-left: -12px;
  padding: 0;
  border: 0;
  outline: 0;
  background: none;
  color: #e6ecef;
  font: 19px/24px Roboto, "Noto Sans", sans-serif;
}

.field input::placeholder {
  color: #8696a0;
  opacity: 1;
}

.mic {
  display: grid;
  place-items: center;
  width: 49px;
  height: 49px;
  padding: 0;
  border: 0;
  border-radius: 50%;
  background: #06ae80;
  cursor: pointer;
}
```
